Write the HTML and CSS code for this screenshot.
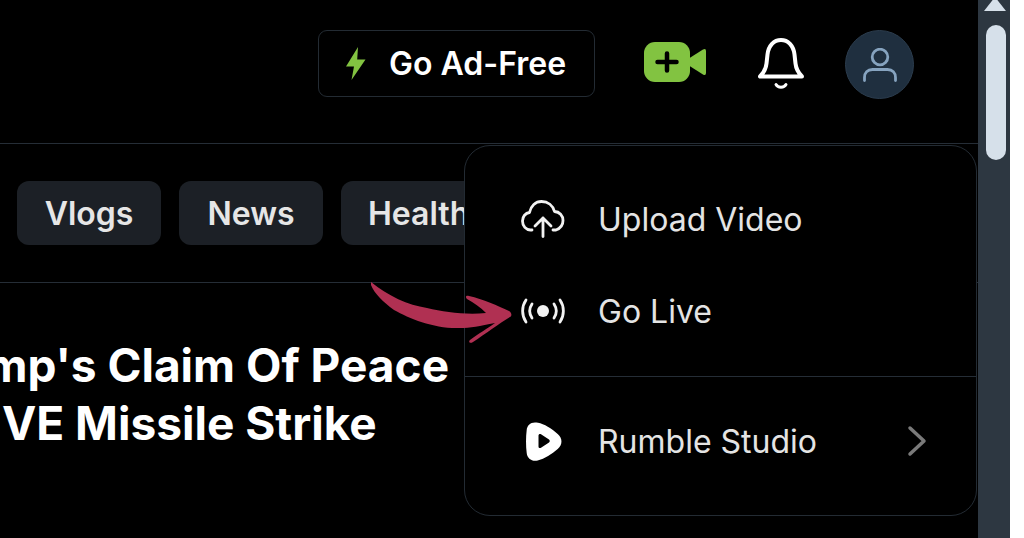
FILE: index.html
```html
<!DOCTYPE html>
<html lang="en">
<head>
<meta charset="utf-8">
<title>Rumble</title>
<link rel="stylesheet" href="styles.css">
</head>
<body>
<div class="app">
  <main class="main">
    <header class="header">
      <button class="adfree">
        <svg class="bolt" viewBox="0 0 21 33" width="21" height="33"><path d="M13 0 1 19.500h8L6.500 33 20.500 12.500h-8.300z" fill="#82c341"/></svg>
        <span>Go Ad-Free</span>
      </button>
      <svg class="camera" viewBox="0 0 62 40" width="62" height="40"><rect x="0" y="0" width="46" height="40" rx="11" fill="#82c341"/><path d="M44 17 59 7.500q3-1.500 3 1.500v22q0 3-3 1.500L44 23z" fill="#82c341"/><path d="M23 11.500v17M13.500 20h19" stroke="#000" stroke-width="4.500" stroke-linecap="round" fill="none"/></svg>
      <svg class="bell" viewBox="0 0 46 52" width="46" height="52" fill="none" stroke="#fff" stroke-width="4" stroke-linecap="round" stroke-linejoin="round"><path d="M2 38.500h42c-4-4-6-8-6.500-13l-1-9C35.500 7.500 30 2 23 2S10.500 7.500 9.500 16.500l-1 9C8 30.500 6 34.500 2 38.500z"/><path d="M18 46.500c2 3.500 8 3.500 10 0" stroke-width="3"/></svg>
      <div class="avatar">
        <svg viewBox="0 0 34 34" width="34" height="34" fill="none" stroke="#86a3bf" stroke-width="2.800" stroke-linecap="round"><circle cx="17" cy="9" r="7.800"/><path d="M1.500 32.500v-3c0-5 3-8 8-8h15c5 0 8 3 8 8v3"/></svg>
      </div>
    </header>
    <nav class="chips">
      <a class="chip">Vlogs</a>
      <a class="chip">News</a>
      <a class="chip">Health</a>
    </nav>
    <h1 class="headline">
      <span class="line line-a">Trump's Claim Of Peace</span>
      <span class="line line-b">LIVE Missile Strike</span>
    </h1>
    <div class="menu">
      <div class="menu-group">
        <a class="menu-item">
          <span class="menu-icon"><svg viewBox="0 0 44 38" width="44" height="38" fill="none" stroke="#f2f2f2" stroke-width="2.800" stroke-linecap="round" stroke-linejoin="round"><path d="M11 30H9.500C5 30 1.500 26 1.500 21c0-4.500 3-8 7-8.500C10 6 14.500 1.500 20.500 1.500c6.500 0 11.500 4 13 10 5 .2 8.500 4 8.500 9 0 4.500-3 8-7 9.500h-3"/><path d="M22 36.500V18M14 26l8-8 8 8"/></svg></span>
          <span>Upload Video</span>
        </a>
        <a class="menu-item">
          <span class="menu-icon"><svg viewBox="0 0 44 26" width="44" height="26" fill="none" stroke="#f2f2f2" stroke-width="2.800" stroke-linecap="round"><circle cx="22" cy="13" r="6" fill="#f2f2f2" stroke="none"/><path d="M5 2C.5 8.500.5 17.500 5 24M39 2c4.500 6.500 4.500 15.500 0 22M11 6c-3 4.500-3 9.500 0 14M33 6c3 4.500 3 9.500 0 14"/></svg></span>
          <span>Go Live</span>
        </a>
      </div>
      <a class="menu-item menu-studio">
        <span class="menu-icon"><svg viewBox="0 0 36 39" width="36" height="39"><path fill-rule="evenodd" fill="#fff" d="M9 .5C4 .5 1 4 .7 8-.2 15-.2 24 .7 31c.5 5.500 5.500 9 11 7.500 7-2 14-6 20-11.500 5-4.500 5-10.500 0-15C25.700 6.500 18 2 12 .8 11 .6 10 .5 9 .5zM12.500 13.500c0-1.300 1.300-2 2.500-1.300l8 5.300c1 .7 1 2.300 0 3l-8 5.300c-1.200.7-2.500 0-2.500-1.300z"/></svg></span>
        <span class="menu-label">Rumble Studio</span>
        <svg class="chevron" viewBox="0 0 20 32" width="20" height="32" fill="none" stroke="#7a7a7a" stroke-width="3.500" stroke-linecap="round" stroke-linejoin="round"><path d="M3 3l14 13L3 29"/></svg>
      </a>
    </div>
    <svg class="arrow" viewBox="0 0 142 62" width="142" height="62" fill="#b03052"><path d="M1 0C18 14 38 23 57 26 75 30 95 33 116 31 110 25 104 21 97 17 95 15 96 13 99 14 113 17 128 24 139 29 142 31 142 34 140 35 130 41 115 52 103 60 100 62 98 60 100 58 108 52 118 46 125 41 110 44 100 46 90 46 65 47 40 37 24 28 13 20 4 11 1 3z"/></svg>
  </main>
  <aside class="scrollbar">
    <span class="scroll-up"></span>
    <span class="scroll-thumb"></span>
  </aside>
  <div class="edge"></div>
</div>
</body>
</html>
```

FILE: styles.css
```css
* { box-sizing: border-box; }
html, body { margin: 0; height: 100%; overflow: hidden; }
body { font-family: Inter, "Liberation Sans", sans-serif; background: #000; color: #fff; }

.app { display: flex; height: 538px; width: 1024px; }

.main { position: relative; flex: 0 0 978px; overflow: hidden; background: #000; }

.header {
  height: 144px;
  border-bottom: 1px solid #252d36;
  display: flex;
  align-items: flex-start;
  padding: 30px 64px 0 0;
  justify-content: flex-end;
}
.adfree {
  width: 277px;
  height: 67px;
  display: flex;
  align-items: center;
  gap: 23px;
  padding: 0 0 0 26px;
  background: transparent;
  border: 1.500px solid #232b33;
  border-radius: 9px;
  color: #fff;
  font: 600 32px Inter, sans-serif;
}
.camera { margin: 12px 0 0 49px; }
.bell { margin: 8px 0 0 52px; }
.avatar {
  width: 69px;
  height: 69px;
  margin-left: 41px;
  border-radius: 50%;
  background: #1f2f3f;
  border: 1px solid #2b3c4d;
  display: flex;
  align-items: center;
  justify-content: center;
}

.chips {
  height: 139px;
  border-bottom: 1px solid #252d36;
  padding: 37px 0 0 17px;
  display: flex;
  gap: 18px;
  align-items: flex-start;
}
.chip {
  flex: none;
  min-width: 144px;
  height: 64px;
  padding: 0 27px;
  background: #1c2026;
  border-radius: 12px;
  display: flex;
  align-items: center;
  justify-content: center;
  color: #e6e6e6;
  font-weight: 600;
  font-size: 32px;
}

.headline {
  margin: 0;
  padding-top: 53px;
  font-size: 46px;
  font-weight: 700;
  line-height: 58px;
  color: #fff;
  white-space: nowrap;
}
.line { display: block; }
.line-a { margin-left: -90px; }
.line-b { margin-left: -37px; }

.menu {
  position: absolute;
  left: 464px;
  top: 145px;
  width: 513px;
  height: 371px;
  background: #000;
  border: 1.500px solid #232b33;
  border-radius: 26px;
  display: flex;
  flex-direction: column;
  color: #e4e4e4;
  font-size: 32px;
}
.menu-group {
  height: 231px;
  border-bottom: 1px solid #252d36;
  padding-top: 27px;
}
.menu-item {
  height: 92px;
  display: flex;
  align-items: center;
  padding-left: 56px;
}
.menu-icon {
  width: 77px;
  flex: none;
  display: flex;
  align-items: center;
}
.menu-studio { margin-top: 18px; padding-left: 61px; }
.menu-studio .menu-icon { width: 72px; }
.menu-label { flex: 1; }
.chevron { margin-right: 49px; }

.arrow { position: absolute; left: 370px; top: 282px; }

.scrollbar {
  position: relative;
  flex: 0 0 32px;
  background: #2d3741;
}
.scroll-up {
  position: absolute;
  left: 6px;
  top: -3px;
  width: 0;
  height: 0;
  border-left: 11px solid transparent;
  border-right: 11px solid transparent;
  border-bottom: 14px solid #d6e0ea;
}
.scroll-thumb {
  position: absolute;
  left: 8px;
  top: 25px;
  width: 20px;
  height: 135px;
  border-radius: 10px;
  background: #d6e0ea;
}
.edge { flex: 1; background: #fff; }
```
